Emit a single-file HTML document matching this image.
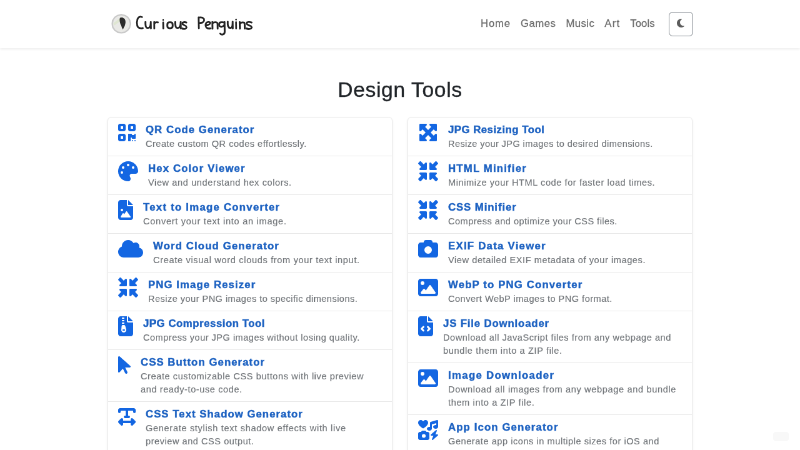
<!DOCTYPE html>
<html><head><meta charset="utf-8"><style>
*{box-sizing:border-box;margin:0;padding:0}
html,body{width:800px;height:450px;overflow:hidden;background:#fff}
.pg{position:absolute;left:0;top:0;width:1280px;height:720px;transform:scale(.625);transform-origin:0 0;will-change:transform;font-family:"Liberation Sans",sans-serif;color:#212529}
.nav{position:absolute;left:0;top:0;width:1280px;height:77px;background:#fff;box-shadow:0 2px 4px rgba(0,0,0,.075);z-index:2}
.logo{position:absolute;left:179px;top:23px;width:30px;height:30px;border-radius:50%;background:#e4e4e0}
.brand{position:absolute;left:218px;top:20px;font-size:24px;line-height:30px;color:#222}
.links{position:absolute;top:25.5px;left:761px;height:24px;display:flex}
.nl{font-size:16.8px;line-height:24px;color:rgba(0,0,0,.55);padding:0 8px;white-space:nowrap;-webkit-text-stroke:.3px rgba(0,0,0,.5)}
.btn{position:absolute;left:1070px;top:19px;width:38.5px;height:38.5px;border:1px solid #7d848b;border-radius:6px}
.btn svg{position:absolute;left:12px;top:9px;width:12px;height:16px;fill:#5c5c5c}
h2{position:absolute;top:125px;left:0;width:1280px;text-align:center;font-weight:400;font-size:33.6px;line-height:38.4px;-webkit-text-stroke:.4px #212529;letter-spacing:0.644px}
.col{position:absolute;top:187.2px;width:456px;box-shadow:0 2px 4px rgba(0,0,0,.075);border-radius:6px}
.it{display:flex;align-items:flex-start;border:1px solid #e8e8e8;border-top-width:0;padding:8px 16px;background:#fff}
.it:first-child{border-top-width:1px;border-radius:6px 6px 0 0}
.ic{height:32px;flex:none;fill:#1366e2;margin-right:16px}
.tt{font-weight:700;font-size:16.8px;line-height:24px;color:#1d62c2;white-space:nowrap;-webkit-text-stroke:.45px #1d62c2}
.ds{font-size:14.6px;line-height:21px;color:#73777b;white-space:nowrap;-webkit-text-stroke:.2px #73777b}
</style></head><body><div class="pg">
<div class="nav">
<div class="links"><span class="nl" style="letter-spacing:0.812px">Home</span><span class="nl" style="letter-spacing:0.455px">Games</span><span class="nl" style="letter-spacing:0.413px">Music</span><span class="nl" style="letter-spacing:1.164px">Art</span><span class="nl" style="letter-spacing:0.048px">Tools</span></div>
<div class="btn"><svg viewBox="0 0 384 512"><path d="M223.5 32C100 32 0 132.3 0 256S100 480 223.5 480c60.6 0 115.5-24.2 155.8-63.4c5-4.9 6.3-12.5 3.1-18.7s-10.1-9.7-17-8.5c-9.8 1.7-19.8 2.6-30.1 2.6c-96.9 0-175.5-78.8-175.5-176c0-65.8 36-123.1 89.3-153.3c6.1-3.5 9.2-10.5 7.7-17.3s-7.3-11.9-14.3-12.5c-6.3-.5-12.6-.8-19-.8z"/></svg></div>
</div>
<h2>Design Tools</h2>
<div class="col" style="left:172px"><div class="it"><svg class="ic" style="width:28.00px" viewBox="0 0 448 512"><path d="M0 80C0 53.5 21.5 32 48 32h96c26.5 0 48 21.5 48 48v96c0 26.5-21.5 48-48 48H48c-26.5 0-48-21.5-48-48V80zM64 96v64h64V96H64zM0 336c0-26.5 21.5-48 48-48h96c26.5 0 48 21.5 48 48v96c0 26.5-21.5 48-48 48H48c-26.5 0-48-21.5-48-48V336zm64 16v64h64V352H64zM304 32h96c26.5 0 48 21.5 48 48v96c0 26.5-21.5 48-48 48H304c-26.5 0-48-21.5-48-48V80c0-26.5 21.5-48 48-48zm80 64H320v64h64V96zM256 304c0-8.8 7.2-16 16-16h64c8.8 0 16 7.2 16 16s7.2 16 16 16h32c8.8 0 16-7.2 16-16s7.2-16 16-16s16 7.2 16 16v96c0 8.8-7.2 16-16 16H368c-8.8 0-16-7.2-16-16s-7.2-16-16-16s-16 7.2-16 16v64c0 8.8-7.2 16-16 16H272c-8.8 0-16-7.2-16-16V304zM368 480a16 16 0 1 1 0-32 16 16 0 1 1 0 32zm64 0a16 16 0 1 1 0-32 16 16 0 1 1 0 32z"/></svg><div class="tx"><div class="tt" style="letter-spacing:1.045px">QR Code Generator</div><div class="ds"><span style="letter-spacing:0.486px">Create custom QR codes effortlessly.</span></div></div></div>
<div class="it"><svg class="ic" style="width:32.00px" viewBox="0 0 512 512"><path d="M512 256v2.7c-.4 36.5-33.6 61.3-70.1 61.3H344c-26.5 0-48 21.5-48 48 0 3.4.4 6.7 1 9.9 2.1 10.2 6.5 20 10.8 29.9 6.1 13.8 12.1 27.5 12.1 42 0 31.8-21.6 60.7-53.4 62-3.5.1-7 .2-10.6.2-141.4 0-256-114.6-256-256S114.6 0 256 0s256 114.6 256 256m-384 32a32 32 0 1 0-64 0 32 32 0 1 0 64 0m0-96a32 32 0 1 0 0-64 32 32 0 1 0 0 64m160-96a32 32 0 1 0-64 0 32 32 0 1 0 64 0m96 96a32 32 0 1 0 0-64 32 32 0 1 0 0 64"/></svg><div class="tx"><div class="tt" style="letter-spacing:1.125px">Hex Color Viewer</div><div class="ds"><span style="letter-spacing:0.589px">View and understand hex colors.</span></div></div></div>
<div class="it"><svg class="ic" style="width:24.00px" viewBox="0 0 384 512"><path d="M64 0C28.7 0 0 28.7 0 64V448c0 35.3 28.7 64 64 64H320c35.3 0 64-28.7 64-64V160H256c-17.7 0-32-14.3-32-32V0H64zM256 0V128H384L256 0zM64 256a32 32 0 1 1 64 0 32 32 0 1 1 -64 0zm152 32c5.3 0 10.2 2.6 13.2 6.9l88 128c3.4 4.9 3.7 11.3 1 16.5s-8.2 8.6-14.2 8.6H216 176 128 80c-5.8 0-11.1-3.1-13.9-8.1s-2.8-11.2 .2-16.1l48-80c2.9-4.8 8.1-7.8 13.7-7.8s10.8 2.9 13.7 7.8l12.8 21.4 48.3-70.2c3-4.3 7.9-6.9 13.2-6.9z"/></svg><div class="tx"><div class="tt" style="letter-spacing:1.241px">Text to Image Converter</div><div class="ds"><span style="letter-spacing:0.713px">Convert your text into an image.</span></div></div></div>
<div class="it"><svg class="ic" style="width:40.00px" viewBox="0 0 640 512"><path d="M0 336c0 79.5 64.5 144 144 144H512c70.7 0 128-57.3 128-128c0-61.9-44-113.6-102.4-125.4c4.1-10.7 6.4-22.4 6.4-34.6c0-53-43-96-96-96c-19.7 0-38.1 6-53.3 16.2C367 64.2 315.3 32 256 32C167.6 32 96 103.6 96 192c0 2.7 .1 5.4 .2 8.1C40.2 219.8 0 273.2 0 336z"/></svg><div class="tx"><div class="tt" style="letter-spacing:1.117px">Word Cloud Generator</div><div class="ds"><span style="letter-spacing:0.653px">Create visual word clouds from your text input.</span></div></div></div>
<div class="it"><svg class="ic" style="width:32.00px" viewBox="0 0 512 512"><path d="M456 224H312c-13.3 0-24-10.7-24-24V56c0-9.7 5.8-18.5 14.8-22.2s19.3-1.6 26.2 5.2l40 40 73.4-73.4C446 2 450.9 0 456 0s10 2 13.7 5.7l36.7 36.7C510 46 512 50.9 512 56s-2 10-5.7 13.7L433 143l40 40c6.9 6.9 8.9 17.2 5.2 26.2S465.7 224 456 224m0 64c9.7 0 18.5 5.8 22.2 14.8s1.7 19.3-5.2 26.2l-40 40 73.4 73.4c3.6 3.6 5.7 8.5 5.7 13.7s-2 10-5.7 13.7l-36.7 36.7c-3.7 3.5-8.6 5.5-13.7 5.5s-10-2-13.7-5.7L369 433l-40 40c-6.9 6.9-17.2 8.9-26.2 5.2S288 465.7 288 456V312c0-13.3 10.7-24 24-24zm-256 0c13.3 0 24 10.7 24 24v144c0 9.7-5.8 18.5-14.8 22.2s-19.3 1.7-26.2-5.2l-40-40-73.4 73.4C66 510 61.1 512 56 512s-10-2-13.7-5.7L5.7 469.7C2 466 0 461.1 0 456s2-10 5.7-13.7L79 369l-40-40c-6.9-6.9-8.9-17.2-5.2-26.2S46.3 288 56 288zM56 224c-9.7 0-18.5-5.8-22.2-14.8S32.2 189.9 39 183l40-40L5.7 69.7C2 66 0 61.1 0 56s2-10 5.7-13.7L42.3 5.7C46 2 50.9 0 56 0s10 2 13.7 5.7L143 79l40-40c6.9-6.9 17.2-8.9 26.2-5.2S224 46.3 224 56v144c0 13.3-10.7 24-24 24z"/></svg><div class="tx"><div class="tt" style="letter-spacing:1.080px">PNG Image Resizer</div><div class="ds"><span style="letter-spacing:0.446px">Resize your PNG images to specific dimensions.</span></div></div></div>
<div class="it"><svg class="ic" style="width:24.00px" viewBox="0 0 384 512"><path fill-rule="evenodd" d="M64 0C28.7 0 0 28.7 0 64V448c0 35.3 28.7 64 64 64H320c35.3 0 64-28.7 64-64V160H256c-17.7 0-32-14.3-32-32V0H64zM256 0V128H384L256 0zM96 48c0 8.8 7.2 16 16 16h32c8.8 0 16-7.2 16-16s-7.2-16-16-16H112c-8.8 0-16 7.2-16 16zm0 64c0 8.8 7.2 16 16 16h32c8.8 0 16-7.2 16-16s-7.2-16-16-16H112c-8.8 0-16 7.2-16 16zm0 64c0 8.8 7.2 16 16 16h32c8.8 0 16-7.2 16-16s-7.2-16-16-16H112c-8.8 0-16 7.2-16 16zm-6.3 71.8L82.1 335.9c-1.4 5.4-2.1 10.9-2.1 16.4c0 35.2 28.8 63.7 64 63.7s64-28.5 64-63.7c0-5.5-.7-11.1-2.1-16.4l-23.5-88.2c-3.7-14-16.4-23.8-30.9-23.8H120.6c-14.5 0-27.2 9.7-30.9 23.8zM128 336h32c8.8 0 16 7.2 16 16s-7.2 16-16 16H128c-8.8 0-16-7.2-16-16s7.2-16 16-16z"/></svg><div class="tx"><div class="tt" style="letter-spacing:0.537px">JPG Compression Tool</div><div class="ds"><span style="letter-spacing:0.470px">Compress your JPG images without losing quality.</span></div></div></div>
<div class="it"><svg class="ic" style="width:20.00px" viewBox="0 0 320 512"><path d="M0 55.2V426c0 12.2 9.9 22 22 22c6.3 0 12.4-2.7 16.6-7.5L121.2 346l58.1 116.3c7.9 15.8 27.1 22.2 42.9 14.3s22.2-27.1 14.3-42.9L179.8 320H297.9c12.2 0 22.1-9.9 22.1-22.1c0-6.3-2.7-12.3-7.4-16.5L38.6 37.9C34.3 34.1 28.9 32 23.2 32C10.4 32 0 42.4 0 55.2z"/></svg><div class="tx"><div class="tt" style="letter-spacing:1.049px">CSS Button Generator</div><div class="ds"><span style="letter-spacing:0.565px">Create customizable CSS buttons with live preview</span><br><span style="letter-spacing:0.575px">and ready-to-use code.</span></div></div></div>
<div class="it"><svg class="ic" style="width:28.00px" viewBox="0 0 448 512"><path d="M64 128V96H192l0 128H176c-17.7 0-32 14.3-32 32s14.3 32 32 32h96c17.7 0 32-14.3 32-32s-14.3-32-32-32H256l0-128H384v32c0 17.7 14.3 32 32 32s32-14.3 32-32V80c0-26.5-21.5-48-48-48H224 48C21.5 32 0 53.5 0 80v48c0 17.7 14.3 32 32 32s32-14.3 32-32zM9.4 361.4c-12.5 12.5-12.5 32.8 0 45.3l64 64c9.2 9.2 22.9 11.9 34.9 6.9s19.8-16.6 19.8-29.6V416H320v32c0 12.9 7.8 24.6 19.8 29.6s25.7 2.2 34.9-6.9l64-64c12.5-12.5 12.5-32.8 0-45.3l-64-64c-9.2-9.2-22.9-11.9-34.9-6.9s-19.8 16.6-19.8 29.6v32H128V320c0-12.9-7.8-24.6-19.8-29.6s-25.7-2.2-34.9 6.9l-64 64z"/></svg><div class="tx"><div class="tt" style="letter-spacing:1.022px">CSS Text Shadow Generator</div><div class="ds"><span style="letter-spacing:0.664px">Generate stylish text shadow effects with live</span><br><span style="letter-spacing:0.525px">preview and CSS output.</span></div></div></div>
</div>
<div class="col" style="left:652px"><div class="it"><svg class="ic" style="width:32.00px" viewBox="-32 0 512 512"><path d="M168 32H24C10.7 32 0 42.7 0 56v144c0 9.7 5.8 18.5 14.8 22.2s19.3 1.6 26.2-5.2l40-40 79 79-79 79-40-40c-6.9-6.9-17.2-8.9-26.2-5.2S0 302.3 0 312v144c0 13.3 10.7 24 24 24h144c9.7 0 18.5-5.8 22.2-14.8s1.7-19.3-5.2-26.2l-40-40 79-79 79 79-40 40c-6.9 6.9-8.9 17.2-5.2 26.2S270.3 480 280 480h144c13.3 0 24-10.7 24-24V312c0-9.7-5.8-18.5-14.8-22.2s-19.3-1.7-26.2 5.2l-40 40-79-79 79-79 40 40c6.9 6.9 17.2 8.9 26.2 5.2S448 209.7 448 200V56c0-13.3-10.7-24-24-24H280c-9.7 0-18.5 5.8-22.2 14.8S256.2 66.1 263 73l40 40-79 79-79-79 40-40c6.9-6.9 8.9-17.2 5.2-26.2S177.7 32 168 32"/></svg><div class="tx"><div class="tt" style="letter-spacing:0.487px">JPG Resizing Tool</div><div class="ds"><span style="letter-spacing:0.376px">Resize your JPG images to desired dimensions.</span></div></div></div>
<div class="it"><svg class="ic" style="width:32.00px" viewBox="0 0 512 512"><path d="M456 224H312c-13.3 0-24-10.7-24-24V56c0-9.7 5.8-18.5 14.8-22.2s19.3-1.6 26.2 5.2l40 40 73.4-73.4C446 2 450.9 0 456 0s10 2 13.7 5.7l36.7 36.7C510 46 512 50.9 512 56s-2 10-5.7 13.7L433 143l40 40c6.9 6.9 8.9 17.2 5.2 26.2S465.7 224 456 224m0 64c9.7 0 18.5 5.8 22.2 14.8s1.7 19.3-5.2 26.2l-40 40 73.4 73.4c3.6 3.6 5.7 8.5 5.7 13.7s-2 10-5.7 13.7l-36.7 36.7c-3.7 3.5-8.6 5.5-13.7 5.5s-10-2-13.7-5.7L369 433l-40 40c-6.9 6.9-17.2 8.9-26.2 5.2S288 465.7 288 456V312c0-13.3 10.7-24 24-24zm-256 0c13.3 0 24 10.7 24 24v144c0 9.7-5.8 18.5-14.8 22.2s-19.3 1.7-26.2-5.2l-40-40-73.4 73.4C66 510 61.1 512 56 512s-10-2-13.7-5.7L5.7 469.7C2 466 0 461.1 0 456s2-10 5.7-13.7L79 369l-40-40c-6.9-6.9-8.9-17.2-5.2-26.2S46.3 288 56 288zM56 224c-9.7 0-18.5-5.8-22.2-14.8S32.2 189.9 39 183l40-40L5.7 69.7C2 66 0 61.1 0 56s2-10 5.7-13.7L42.3 5.7C46 2 50.9 0 56 0s10 2 13.7 5.7L143 79l40-40c6.9-6.9 17.2-8.9 26.2-5.2S224 46.3 224 56v144c0 13.3-10.7 24-24 24z"/></svg><div class="tx"><div class="tt" style="letter-spacing:1.177px">HTML Minifier</div><div class="ds"><span style="letter-spacing:0.565px">Minimize your HTML code for faster load times.</span></div></div></div>
<div class="it"><svg class="ic" style="width:32.00px" viewBox="0 0 512 512"><path d="M456 224H312c-13.3 0-24-10.7-24-24V56c0-9.7 5.8-18.5 14.8-22.2s19.3-1.6 26.2 5.2l40 40 73.4-73.4C446 2 450.9 0 456 0s10 2 13.7 5.7l36.7 36.7C510 46 512 50.9 512 56s-2 10-5.7 13.7L433 143l40 40c6.9 6.9 8.9 17.2 5.2 26.2S465.7 224 456 224m0 64c9.7 0 18.5 5.8 22.2 14.8s1.7 19.3-5.2 26.2l-40 40 73.4 73.4c3.6 3.6 5.7 8.5 5.7 13.7s-2 10-5.7 13.7l-36.7 36.7c-3.7 3.5-8.6 5.5-13.7 5.5s-10-2-13.7-5.7L369 433l-40 40c-6.9 6.9-17.2 8.9-26.2 5.2S288 465.7 288 456V312c0-13.3 10.7-24 24-24zm-256 0c13.3 0 24 10.7 24 24v144c0 9.7-5.8 18.5-14.8 22.2s-19.3 1.7-26.2-5.2l-40-40-73.4 73.4C66 510 61.1 512 56 512s-10-2-13.7-5.7L5.7 469.7C2 466 0 461.1 0 456s2-10 5.7-13.7L79 369l-40-40c-6.9-6.9-8.9-17.2-5.2-26.2S46.3 288 56 288zM56 224c-9.7 0-18.5-5.8-22.2-14.8S32.2 189.9 39 183l40-40L5.7 69.7C2 66 0 61.1 0 56s2-10 5.7-13.7L42.3 5.7C46 2 50.9 0 56 0s10 2 13.7 5.7L143 79l40-40c6.9-6.9 17.2-8.9 26.2-5.2S224 46.3 224 56v144c0 13.3-10.7 24-24 24z"/></svg><div class="tx"><div class="tt" style="letter-spacing:0.897px">CSS Minifier</div><div class="ds"><span style="letter-spacing:0.460px">Compress and optimize your CSS files.</span></div></div></div>
<div class="it"><svg class="ic" style="width:32.00px" viewBox="0 0 512 512"><path d="M149.1 64.8 138.7 96H64c-35.3 0-64 28.7-64 64v256c0 35.3 28.7 64 64 64h384c35.3 0 64-28.7 64-64V160c0-35.3-28.7-64-64-64h-74.7l-10.4-31.2C356.4 45.2 338.1 32 317.4 32H194.6c-20.7 0-39 13.2-45.5 32.8M256 192a96 96 0 1 1 0 192 96 96 0 1 1 0-192"/></svg><div class="tx"><div class="tt" style="letter-spacing:1.254px">EXIF Data Viewer</div><div class="ds"><span style="letter-spacing:0.564px">View detailed EXIF metadata of your images.</span></div></div></div>
<div class="it"><svg class="ic" style="width:32.00px" viewBox="0 0 512 512"><path d="M0 96C0 60.7 28.7 32 64 32H448c35.3 0 64 28.7 64 64V416c0 35.3-28.7 64-64 64H64c-35.3 0-64-28.7-64-64V96zM323.8 202.5c-4.5-6.6-11.9-10.5-19.8-10.5s-15.4 3.9-19.8 10.5l-87 127.6L170.7 297c-4.6-5.7-11.5-9-18.7-9s-14.2 3.3-18.7 9l-64 80c-5.8 7.2-6.9 17.1-2.9 25.4s12.4 13.6 21.6 13.6h96 32H424c8.9 0 17.1-4.9 21.2-12.8s3.6-17.4-1.4-24.7l-120-176zM112 192a48 48 0 1 0 0-96 48 48 0 1 0 0 96z"/></svg><div class="tx"><div class="tt" style="letter-spacing:1.135px">WebP to PNG Converter</div><div class="ds"><span style="letter-spacing:0.470px">Convert WebP images to PNG format.</span></div></div></div>
<div class="it"><svg class="ic" style="width:24.00px" viewBox="0 0 384 512"><path d="M64 0C28.7 0 0 28.7 0 64V448c0 35.3 28.7 64 64 64H320c35.3 0 64-28.7 64-64V160H256c-17.7 0-32-14.3-32-32V0H64zM256 0V128H384L256 0zM153 289l-31 31 31 31c9.4 9.4 9.4 24.6 0 33.9s-24.6 9.4-33.9 0L71 337c-9.4-9.4-9.4-24.6 0-33.9l48-48c9.4-9.4 24.6-9.4 33.9 0s9.4 24.6 0 33.9zM265 255l48 48c9.4 9.4 9.4 24.6 0 33.9l-48 48c-9.4 9.4-24.6 9.4-33.9 0s-9.4-24.6 0-33.9l31-31-31-31c-9.4-9.4-9.4-24.6 0-33.9s24.6-9.4 33.9 0z"/></svg><div class="tx"><div class="tt" style="letter-spacing:0.842px">JS File Downloader</div><div class="ds"><span style="letter-spacing:0.532px">Download all JavaScript files from any webpage and</span><br><span style="letter-spacing:0.623px">bundle them into a ZIP file.</span></div></div></div>
<div class="it"><svg class="ic" style="width:32.00px" viewBox="0 0 512 512"><path d="M0 96C0 60.7 28.7 32 64 32H448c35.3 0 64 28.7 64 64V416c0 35.3-28.7 64-64 64H64c-35.3 0-64-28.7-64-64V96zM323.8 202.5c-4.5-6.6-11.9-10.5-19.8-10.5s-15.4 3.9-19.8 10.5l-87 127.6L170.7 297c-4.6-5.7-11.5-9-18.7-9s-14.2 3.3-18.7 9l-64 80c-5.8 7.2-6.9 17.1-2.9 25.4s12.4 13.6 21.6 13.6h96 32H424c8.9 0 17.1-4.9 21.2-12.8s3.6-17.4-1.4-24.7l-120-176zM112 192a48 48 0 1 0 0-96 48 48 0 1 0 0 96z"/></svg><div class="tx"><div class="tt" style="letter-spacing:1.323px">Image Downloader</div><div class="ds"><span style="letter-spacing:0.639px">Download all images from any webpage and bundle</span><br><span style="letter-spacing:0.612px">them into a ZIP file.</span></div></div></div>
<div class="it"><svg class="ic" style="width:32.00px" viewBox="0 0 512 512"><path d="M174.9 272c10.7 0 20.7 5.3 26.6 14.2l11.8 17.8H240c26.5 0 48 21.5 48 48v112c0 26.5-21.5 48-48 48H48c-26.5 0-48-21.5-48-48V352c0-26.5 21.5-48 48-48h26.7l11.8-17.8c5.9-8.9 15.9-14.2 26.6-14.2h61.7zm278.6-12c5.6-4.9 13.9-5.3 19.9-.9s8.3 12.4 5.3 19.3L440.3 368H496c6.7 0 12.6 4.1 15 10.4s.6 13.3-4.4 17.7l-128 112c-5.6 4.9-13.9 5.3-19.9.9s-8.3-12.4-5.3-19.3l38.5-89.7h-55.8c-6.7 0-12.6-4.1-15-10.4s-.6-13.3 4.4-17.7l128-112zM144 360a48 48 0 1 0 0 96 48 48 0 1 0 0-96M483.8.4c6.5-1.1 13.1.4 18.5 4.4 6.1 4.5 9.7 11.7 9.7 19.2v152l-.3 4.9c-3.3 24.2-30.5 43.1-63.7 43.1-35.3 0-64-21.5-64-48s28.7-48 64-48c5.5 0 10.9.6 16 1.6V80.3l-112 33.6v110.2l-.3 4.9c-3.3 24.2-30.5 43.1-63.7 43.1-35.3 0-64-21.5-64-48s28.7-48 64-48c5.5 0 10.9.6 16 1.6V72c0-10.6 7-20 17.1-23l160-48zM188.9 0C226 0 256 30 256 67.1v6.1c0 56.1-75.2 112.1-110.3 135.3-10.8 7.1-24.6 7.1-35.4 0C75.2 185.4 0 129.3 0 73.2v-6.1C0 30 30 0 67.1 0c21.1 0 40.9 9.9 53.6 26.8l7.3 9.8 7.3-9.8C148 9.9 167.8 0 188.9 0"/></svg><div class="tx"><div class="tt" style="letter-spacing:1.110px">App Icon Generator</div><div class="ds"><span style="letter-spacing:0.532px">Generate app icons in multiple sizes for iOS and</span><br><span style="letter-spacing:0.600px">Android.</span></div></div></div>
</div>
</div><svg style="position:absolute;left:0;top:0;z-index:5" width="800" height="50" viewBox="0 0 800 50">
<circle cx="121.3" cy="23.8" r="9.1" fill="#e9e9e6" stroke="#cacaca" stroke-width="1.4"/>
<path d="M114.6,23.8 L120,19.8" stroke="#dfe6d2" stroke-width="2.6" stroke-linecap="round"/>
<path transform="translate(122.5 23.5) scale(1.12) translate(-122.5 -23.5)" d="M120.2,18.6 C121.5,17.8 123.5,18.2 124.6,19.8 C125.6,21.3 125.4,23.5 124.6,25.2 C124,26.6 123.4,27.8 122.8,28.8 C122.2,27.5 121.2,25.5 120.6,23.8 C120,22 119.6,19.6 120.2,18.6 Z" fill="#2b2b2b"/>
<g fill="none" stroke="#252525" stroke-width="1.8" stroke-linecap="round" stroke-linejoin="round">
<path d="M142,17 C139.3,15.8 136.9,18.2 136.8,22.6 C136.7,27 138.8,29 142.9,28.2"/>
<path d="M145.4,21.8 C145.2,25.2 145.7,28.2 147.9,28.2 C149.7,28.2 150.7,26.2 150.8,21.8 L151,28.4"/>
<path d="M154.2,21.9 L154.3,28.4 M154.3,24 C155,22.4 156.4,21.8 158,22.3"/>
<path d="M163.25,22.4 L163.35,28.4"/>
<circle cx="163.25" cy="19.9" r=".9" fill="#2a2a2a" stroke="none"/>
<ellipse cx="170" cy="25.3" rx="2.8" ry="3.1"/>
<path d="M175.2,21.8 C175,25.2 175.5,28.2 177.7,28.2 C179.5,28.2 180.6,26.2 180.7,21.8 L180.9,28.4"/>
<path d="M186.4,22.6 C184.8,21.6 182.4,21.8 182.4,23.6 C182.4,25.5 186.6,25 186.6,27.2 C186.6,29 183.6,29.2 182.1,28.4"/>
<path d="M198.6,17.3 L198.8,28.3 M198.6,17.6 C201.5,16.8 204.3,18 204.1,20.2 C203.9,22.4 201,23.3 198.8,23.2"/>
<path d="M205.6,25.2 C207.3,25.3 210.4,24.6 210.2,22.9 C210,21.4 206.3,21.2 205.6,24.2 C205,27 206.8,29 210.6,28.4"/>
<path d="M212.3,22 L212.5,28.6 M212.5,23.6 C213.3,22 217.6,21.2 217.6,24.2 L217.7,28.6"/>
<path d="M224.5,22.8 C223.5,21.8 219.2,21.3 219,24.6 C219,27.4 223,27.6 224.5,24.6 M224.6,22 L224.8,31.5 C224.9,34.8 221.2,35.2 220.2,33.6"/>
<path d="M227.8,21.6 C227.6,25 228.1,28.1 230.3,28.1 C232,28.1 232.7,26 232.7,21.6 L232.9,28.4"/>
<path d="M236.1,22.2 L236.2,28.4"/>
<circle cx="236.1" cy="19.6" r=".9" fill="#2a2a2a" stroke="none"/>
<path d="M239.8,22 L240,28.6 M240,23.8 C241,22.2 244.8,21.3 244.8,24.4 L244.9,28.6"/>
<path d="M251.6,22.6 C250,21.6 246.6,21.6 246.6,23.6 C246.6,25.6 251.8,25.1 251.8,27.3 C251.8,29.1 248,29.4 246.3,28.4"/>
</g></svg>
<div style="position:absolute;left:773px;top:432px;width:16px;height:8.5px;border-radius:3px;background:#f8f8f8"></div>
</body></html>
